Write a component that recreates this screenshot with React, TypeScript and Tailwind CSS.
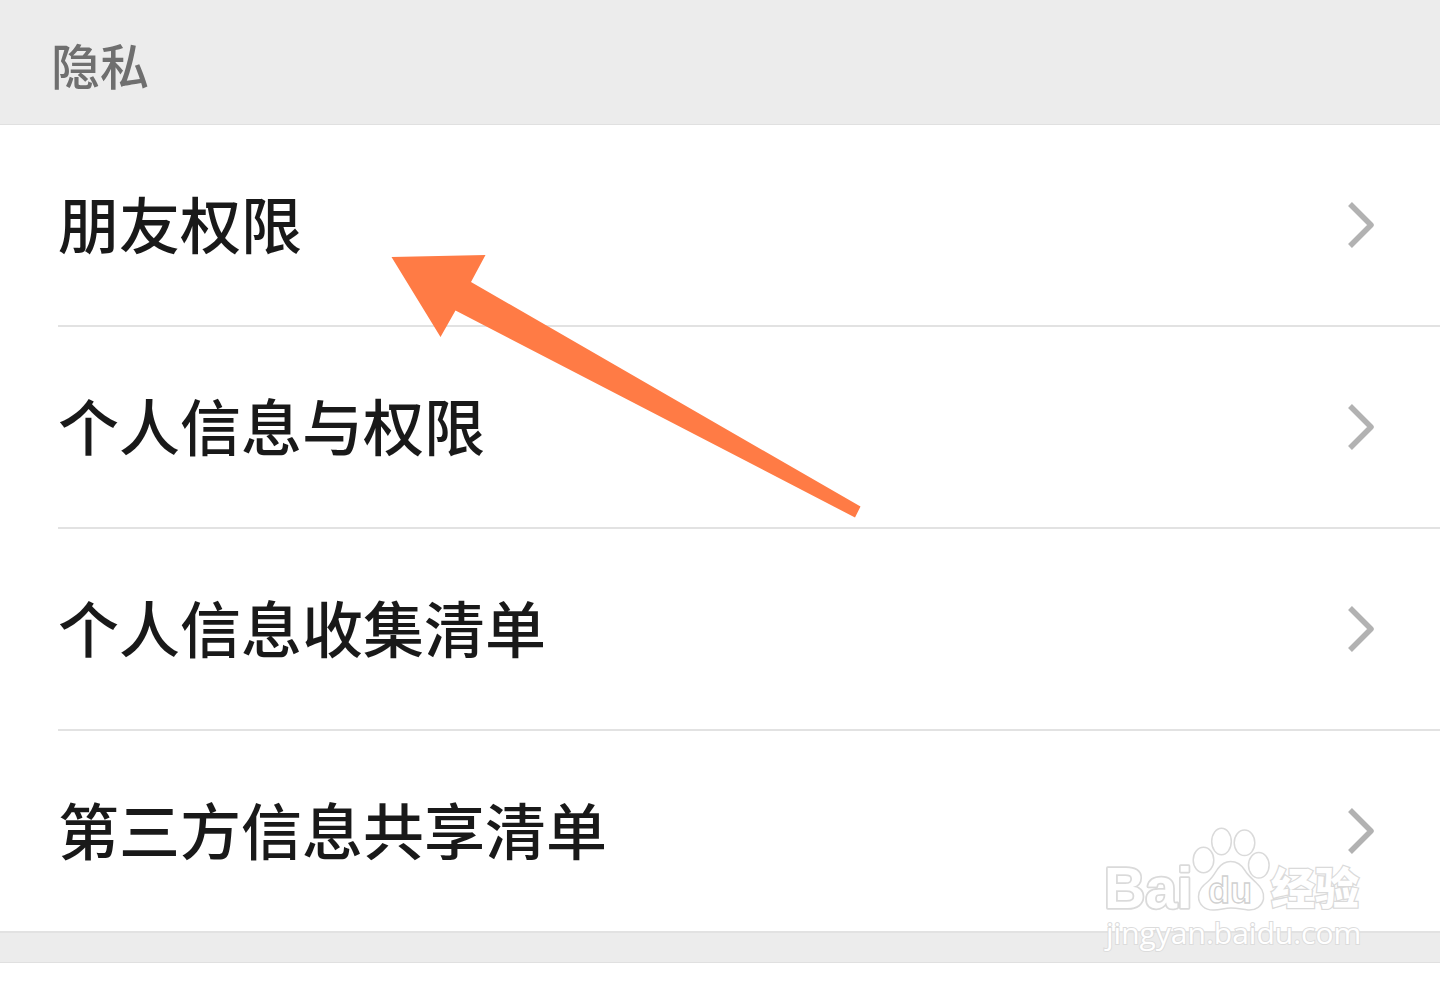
const rows = ['朋友权限', '个人信息与权限', '个人信息收集清单', '第三方信息共享清单'];

function Chevron() {
  return (
    <svg aria-hidden="true" className="h-12 w-7 shrink-0" viewBox="0 0 28 48" fill="none">
      <path d="M3 3 24 24 3 45" stroke="#b2b2b2" strokeWidth="5.5" strokeLinejoin="round" />
    </svg>
  );
}

function Arrow() {
  return (
    <svg
      aria-hidden="true"
      className="pointer-events-none absolute top-[130px] left-[391px] h-[264px] w-[470px]"
      viewBox="0 0 470 264"
    >
      <path d="M.5 2 94.5 0 80 27 469.5 251.5 464 262.5 64.5 55.5 49.5 82Z" fill="#ff7b45" />
    </svg>
  );
}

function Watermark() {
  return (
    <div className="pointer-events-none absolute right-[68px] bottom-[-14px] flex w-[270px] flex-col">
      <svg
        role="img"
        aria-label="Baidu 经验"
        className="h-[92px] w-full overflow-visible"
        viewBox="0 4 270 92"
        fill="#fff"
        stroke="#dadada"
        strokeWidth="1.5"
      >
        <text
          x="2"
          y="85"
          fontSize="57"
          strokeWidth="3.5"
          paintOrder="stroke"
          strokeLinejoin="round"
          className="font-['Liberation_Sans',sans-serif] font-bold"
        >
          Bai
        </text>
        <ellipse cx="101.5" cy="37" rx="10.3" ry="12.8" />
        <ellipse cx="119.5" cy="18.5" rx="9.8" ry="13.3" />
        <ellipse cx="142.5" cy="19.8" rx="10.3" ry="12.8" />
        <ellipse cx="156.8" cy="42.3" rx="10.3" ry="12.8" />
        <path d="M128.5 38.5C135 38.5 140 42.5 143 47.5C146 52.5 150 55.5 154 59.5C159 64.5 162.5 69 161.5 76C160 83 154 87.5 146 87C140 86.500 136 85 129 85C122 85 119 87 112 87C103 87.500 96.500 81.500 96.500 73.500C96.500 66.500 101 62.500 106 58.500C111 54.500 113 49.500 116 45.500C119 41.500 123 38.500 128.500 38.500Z" />
        <text
          x="106"
          y="80"
          fontSize="36"
          strokeWidth="1.3"
          stroke="#d0d0d0"
          className="font-['Liberation_Sans',sans-serif] font-bold"
        >
          du
        </text>
        <text
          x="169"
          y="82"
          fontSize="44"
          strokeWidth="2.5"
          paintOrder="stroke"
          className="font-['Noto_Sans_CJK_SC',sans-serif] font-black"
        >
          经验
        </text>
      </svg>
      <span className="pl-1 font-['Open_Sans',sans-serif] text-[30px] leading-7 text-white [-webkit-text-stroke:2px_#dcdcdc] [paint-order:stroke]">
        jingyan.baidu.com
      </span>
    </div>
  );
}

export default function App() {
  return (
    <main className="min-h-screen bg-white font-['Noto_Sans_CJK_SC',sans-serif]">
      <header className="border-b border-[#e0e0e0] bg-[#ececec] pt-7 pb-6 pl-[51px]">
        <h1 className="text-[49px] leading-[72px] font-medium text-[#6f6f6f]">隐私</h1>
      </header>
      <section className="relative">
        <ul className="border-b-2 border-[#e2e2e2]">
          {rows.map((label, i) => (
            <li key={label} className="pl-[58px]">
              <button
                type="button"
                className={`flex w-full items-center justify-between pr-[65px] text-left ${
                  i < rows.length - 1 ? 'border-b-2 border-[#e2e2e2]' : ''
                }`}
              >
                <span className="pb-1 text-[61px] leading-[196px] font-medium text-[#191919]">{label}</span>
                <Chevron />
              </button>
            </li>
          ))}
        </ul>
        <Arrow />
        <Watermark />
      </section>
      <div className="h-[30px] border-b border-[#e0e0e0] bg-[#ececec]" />
    </main>
  );
}
